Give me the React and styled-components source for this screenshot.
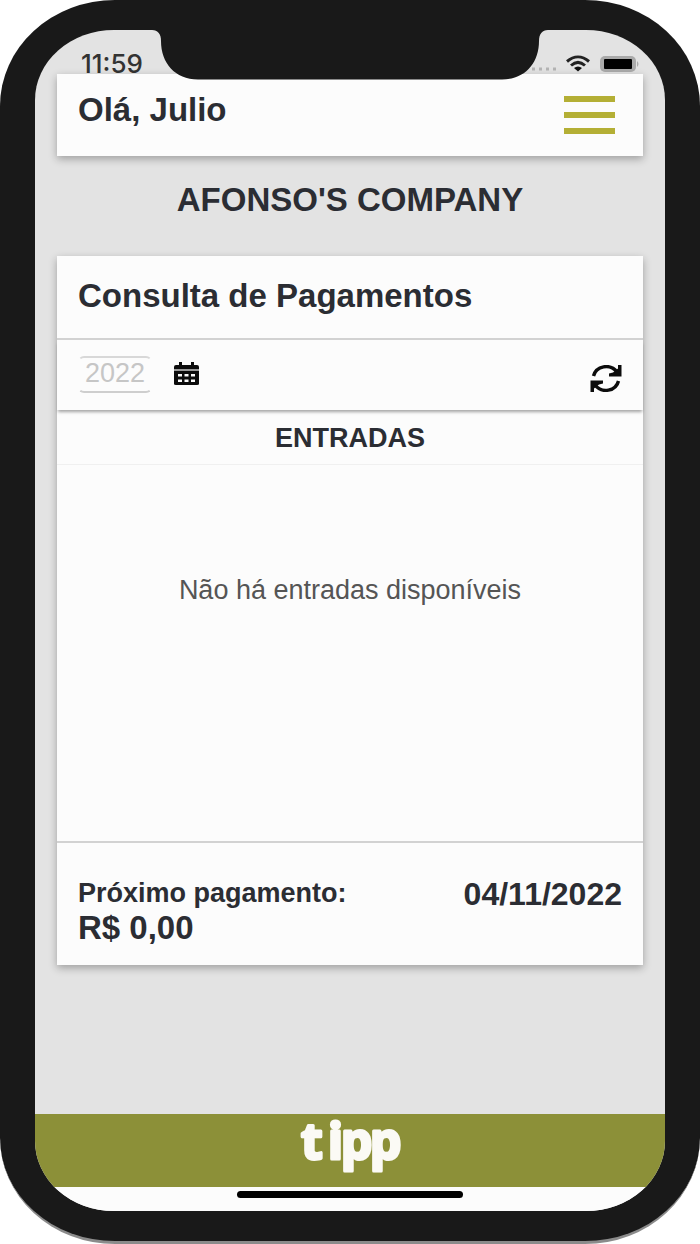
import React, { useState } from 'react'
import styled, { createGlobalStyle } from 'styled-components'


const GlobalStyle = createGlobalStyle`
    * {
        box-sizing: border-box;
    }

    body {
        margin: 0;
        background: #fff;
        color: #2b2d33;
        font-family: "Liberation Sans", Arial, sans-serif;
    }

    h1, h2, h3, p {
        margin: 0;
    }
`;

const Phone = styled.div`
    position: relative;
    display: flex;
    flex-direction: column;
    min-height: 100vh;
    padding: 30px 35px;
    background: #191919;
    border-bottom: 3px solid #8b8b8b;
    border-radius: 115px / 106px;
`;

const Screen = styled.div`
    flex: 1;
    display: flex;
    flex-direction: column;
    background: #e3e3e3;
    border-radius: 79px / 70px;
    overflow: hidden;
`;

const Notch = styled.svg`
    position: absolute;
    top: 29px;
    left: 50%;
    transform: translateX(-50%);
`;

const StatusBar = styled.div`
    display: flex;
    justify-content: space-between;
    align-items: flex-end;
    height: 44px;
    padding: 0 26px 0 46px;
`;

const Time = styled.span`
    color: #333;
    font-family: Inter, sans-serif;
    font-size: 26px;
    font-weight: 500;
    line-height: 20px;
`;

const StatusIcons = styled.svg`
    display: block;
`;

const Page = styled.main`
    flex: 1;
    padding: 0 22px;
`;

const Card = styled.section`
    background: #fcfcfc;
    box-shadow: 0 3px 8px rgba(0, 0, 0, 0.3);
`;

const Header = styled(Card).attrs({ as: 'header' })`
    display: flex;
    justify-content: space-between;
    align-items: flex-start;
    height: 82px;
    padding: 16px 28px 0 21px;
`;

const Title = styled.h2`
    font-size: 33px;
    line-height: 40px;
`;

const MenuButton = styled.button`
    display: flex;
    flex-direction: column;
    gap: 10px;
    width: 51px;
    margin-top: 6px;
    padding: 0;
    border: 0;
    background: none;
    cursor: pointer;
`;

const Line = styled.span`
    height: 6px;
    background: #b4af35;
`;

const Company = styled.h1`
    padding: 24px 0 36px;
    font-size: 33px;
    line-height: 40px;
    text-align: center;
`;

const CardHead = styled.div`
    padding: 20px 21px 22px;
    border-bottom: 2px solid #d2d2d2;
`;

const Filter = styled.div`
    display: flex;
    align-items: flex-start;
    height: 70px;
    padding: 16px 21px 0;
    box-shadow: 0 3px 3px -1px rgba(0, 0, 0, 0.35);
`;

const YearInput = styled.input`
    width: 74px;
    height: 37px;
    padding: 0 0 3px;
    border: 2px solid transparent;
    border-top-color: #d8d8d8;
    border-bottom-color: #cecece;
    border-radius: 6px;
    background: none;
    color: #c6c6c6;
    font-family: inherit;
    font-size: 27px;
    text-align: center;
`;

const IconButton = styled.button`
    display: flex;
    margin-left: ${({ $end }) => ($end ? 'auto' : '22px')};
    padding: ${({ $end }) => ($end ? '9px 0 0' : '6px 0 0')};
    border: 0;
    background: none;
    color: #0c0c0c;
    cursor: pointer;
`;

const Subtitle = styled.h3`
    padding: 13px 0 11px;
    border-bottom: 1px solid #f0f0f0;
    font-size: 27px;
    line-height: 30px;
    text-align: center;
`;

const Empty = styled.p`
    height: 376px;
    padding-top: 110px;
    color: #555;
    font-size: 27px;
    line-height: 30px;
    text-align: center;
`;

const Summary = styled.div`
    display: flex;
    justify-content: space-between;
    align-items: flex-start;
    padding: 35px 21px 17px;
    border-top: 2px solid #d2d2d2;
    font-weight: 700;
`;

const Label = styled.p`
    font-size: 27px;
    line-height: 30px;
`;

const Amount = styled.p`
    font-size: 33px;
    line-height: 40px;
`;

const NextDate = styled.p`
    font-size: 32px;
    line-height: 32px;
`;

const Footer = styled.footer`
    display: flex;
    justify-content: center;
    height: 73px;
    background: #8c9038;
`;

const Logo = styled.svg`
    overflow: visible;
    font-family: "Noto Sans", sans-serif;
    font-size: 50px;
    font-weight: 700;
    fill: #fbfaf5;
    stroke: #fbfaf5;
    stroke-width: 3px;
    stroke-linejoin: round;
`;

const HomeBar = styled.div`
    display: flex;
    justify-content: center;
    height: 24px;
    padding-top: 4px;
    background: #fcfcfc;
`;

const Indicator = styled.div`
    width: 36%;
    height: 7px;
    border-radius: 4px;
    background: #000;
`;

const CalendarIcon = () => (
    <svg width="25" height="24" viewBox="0 0 25 24" aria-hidden="true">
        <path d="M0 7h25v3H0z" fill="#999" />
        <path d="M5 0h3v3h9V0h3v3h3q2 0 2 2v2H0V5q0-2 2-2h3z" fill="currentColor" />
        <path
            fillRule="evenodd"
            d="M0 9h25v13q0 1-2 1H2q-2 0-2-1zM4 12v2.500h4v-2.500zM10.500 12v2.500h4v-2.500zM17 12v2.500h4v-2.500zM4 17.500v2.500h4v-2.500zM10.500 17.500v2.500h4v-2.500zM17 17.500v2.500h4v-2.500z"
            fill="currentColor"
        />
    </svg>
)

const SyncIcon = () => (
    <svg width="32" height="27" viewBox="0 0 32 27" aria-hidden="true">
        <g fill="none" stroke="currentColor" strokeWidth="3.4">
            <path d="M3.500 11C6 1 20 -2 27 7" />
            <path d="M28.500 16C26 26 12 29 5 20" />
        </g>
        <path d="M28 0H31.500V11.500H19V8.500L23 7.500L28 3.500Z" fill="currentColor" />
        <path d="M4 27H0.500V15.500H13V18.500L9 19.500L4 23.500Z" fill="currentColor" />
    </svg>
)

const Status = () => (
    <StatusBar>
        <Time>11:59</Time>
        <StatusIcons width="112" height="20" viewBox="0 0 112 20" fill="none" aria-hidden="true">
            <path d="M5 15h3M12 15h3M19 15h3M26 15h3" stroke="#b4b4b4" strokeWidth="3" />
            <g stroke="#222" strokeWidth="3">
                <path d="M40 7.500C47 1.500 55 1.500 62 7.500" />
                <path d="M44 11.500C48.500 7.500 53.500 7.500 58 11.500" />
            </g>
            <path d="M47 14C49.500 12 52.500 12 55 14L51 17.500Z" fill="#111" />
            <rect x="73" y="2" width="36" height="16" rx="5" fill="#aaa" />
            <path d="M110 7q3 3 0 6z" fill="#aaa" />
            <rect x="77" y="5" width="28" height="10" rx="1" fill="#000" />
        </StatusIcons>
    </StatusBar>
)

const App = () => {
    const [year, setYear] = useState('2022')

    return (
        <>
            <GlobalStyle />
            <Phone>
                <Screen>
                    <Status />

                    <Page>
                        <Header>
                            <Title>Olá, Julio</Title>
                            <MenuButton aria-label="Menu">
                                <Line />
                                <Line />
                                <Line />
                            </MenuButton>
                        </Header>

                        <Company>AFONSO'S COMPANY</Company>

                        <Card>
                            <CardHead>
                                <Title>Consulta de Pagamentos</Title>
                            </CardHead>

                            <Filter>
                                <YearInput
                                    aria-label="Ano"
                                    value={year}
                                    onChange={(e) => setYear(e.target.value)}
                                />
                                <IconButton aria-label="Calendário">
                                    <CalendarIcon />
                                </IconButton>
                                <IconButton $end aria-label="Atualizar">
                                    <SyncIcon />
                                </IconButton>
                            </Filter>

                            <Subtitle>ENTRADAS</Subtitle>
                            <Empty>Não há entradas disponíveis</Empty>

                            <Summary>
                                <div>
                                    <Label>Próximo pagamento:</Label>
                                    <Amount>R$ 0,00</Amount>
                                </div>
                                <NextDate>04/11/2022</NextDate>
                            </Summary>
                        </Card>
                    </Page>

                    <Footer>
                        <Logo width="104" height="73" viewBox="0 0 104 73" role="img" aria-label="tipp">
                            <text x="3 30 43 72" y="45">tipp</text>
                        </Logo>
                    </Footer>
                    <HomeBar>
                        <Indicator />
                    </HomeBar>
                </Screen>

                <Notch width="396" height="51" viewBox="0 0 396 51" aria-hidden="true">
                    <path
                        d="M0 0V1C6 1 9 5 9 12C9 34 23 50.500 46 50.500H350C373 50.500 387 34 387 12C387 5 390 1 396 1V0Z"
                        fill="#191919"
                    />
                </Notch>
            </Phone>
        </>
    )
}

export default App
